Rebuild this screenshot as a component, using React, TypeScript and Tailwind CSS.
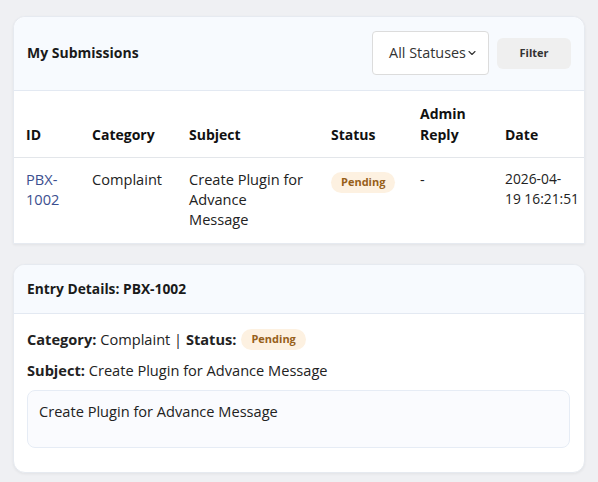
import { ChevronDown } from "lucide-react";

type Submission = {
  id: string;
  category: string;
  subject: string;
  status: string;
  reply: string;
  date: string;
};

const submissions: Submission[] = [
  {
    id: "PBX-1002",
    category: "Complaint",
    subject: "Create Plugin for Advance Message",
    status: "Pending",
    reply: "-",
    date: "2026-04-19\u00a016:21:51",
  },
];

function StatusBadge({ status }: { status: string }) {
  return (
    <span className="inline-flex h-[21px] items-center rounded-full bg-[#fdf1e1] px-[10px] text-[11px] font-bold text-[#97601a]">
      {status}
    </span>
  );
}

const columns = [
  { label: "ID", width: "w-[66px]" },
  { label: "Category", width: "w-[97px]" },
  { label: "Subject", width: "w-[142px]" },
  { label: "Status", width: "w-[89px]" },
  { label: "Admin Reply", width: "w-[85px]" },
  { label: "Date", width: "" },
];

export default function App() {
  const selected = submissions[0];

  return (
    <div className="min-h-screen bg-[#eff0f3] px-[13px] pt-[16px] pb-[10px] font-['Open_Sans',sans-serif] text-[#222]">
      {/* Submissions list */}
      <div className="rounded-t-xl border border-[#e6eaf0] bg-white shadow-[0_1px_3px_rgba(0,0,0,0.06)]">
        <div className="flex items-center justify-between rounded-t-xl border-b border-[#e3e9f2] bg-[#f7fafe] px-[13px] pt-[14px] pb-[15px]">
          <h2 className="text-sm font-bold text-[#1a1a1a]">My Submissions</h2>
          <div className="flex items-center gap-[8px]">
            <button className="flex h-[44px] w-[117px] items-center justify-center whitespace-nowrap rounded border border-[#dcdcdc] bg-white pl-[10px] pr-[4px] text-[14.4px] text-[#333]">
              All Statuses
              <ChevronDown className="h-[12px] w-[12px] shrink-0" strokeWidth={2.2} />
            </button>
            <button className="h-[31px] w-[74px] rounded-md bg-[#efefef] text-[11px] font-bold text-[#333]">
              Filter
            </button>
          </div>
        </div>

        <table className="w-full table-fixed border-collapse text-left text-[14.6px]">
          <thead>
            <tr className="border-b border-[#e3e6ea]">
              {columns.map((c) => (
                <th
                  key={c.label}
                  className={`${c.width} px-3 py-3 align-bottom text-sm font-bold leading-[21px] text-[#111]`}
                >
                  {c.label}
                </th>
              ))}
            </tr>
          </thead>
          <tbody>
            {submissions.map((s) => (
              <tr key={s.id}>
                <td className="px-3 pt-[11px] pb-[14px] align-top leading-5 text-[#3b4f8f]">{s.id}</td>
                <td className="px-3 pt-[11px] pb-[14px] align-top leading-5">{s.category}</td>
                <td className="px-3 pt-[11px] pb-[14px] align-top leading-5">{s.subject}</td>
                <td className="px-3 pt-[12px] pb-[14px] align-top leading-5">
                  <StatusBadge status={s.status} />
                </td>
                <td className="px-3 pt-[11px] pb-[14px] align-top leading-5">{s.reply}</td>
                <td className="px-3 pt-[11px] pb-[14px] align-top text-[13.8px] leading-5">{s.date}</td>
              </tr>
            ))}
          </tbody>
        </table>
      </div>

      {/* Entry details */}
      <div className="mt-[20px] overflow-hidden rounded-xl border border-[#e6eaf0] bg-white shadow-[0_1px_3px_rgba(0,0,0,0.06)]">
        <div className="flex h-[49px] items-center border-b border-[#e3e9f2] bg-[#f7fafe] px-[13px]">
          <h3 className="text-[13.8px] font-bold text-[#1a1a1a]">Entry Details: {selected.id}</h3>
        </div>
        <div className="flex flex-col gap-[10px] pt-[15px] pr-[14px] pb-[24px] pl-[13px] text-[14.6px]">
          <div className="flex h-[21px] items-center gap-[5px]">
            <span>
              <b className="font-bold">Category:</b> {selected.category} | <b className="font-bold">Status:</b>
            </span>
            <StatusBadge status={selected.status} />
          </div>
          <p className="leading-5">
            <b className="font-bold">Subject:</b> {selected.subject}
          </p>
          <div className="h-[58px] rounded-lg border border-[#e6ecf5] bg-[#fafbfe] px-[11px] py-[10px] leading-5">
            {selected.subject}
          </div>
        </div>
      </div>
    </div>
  );
}
